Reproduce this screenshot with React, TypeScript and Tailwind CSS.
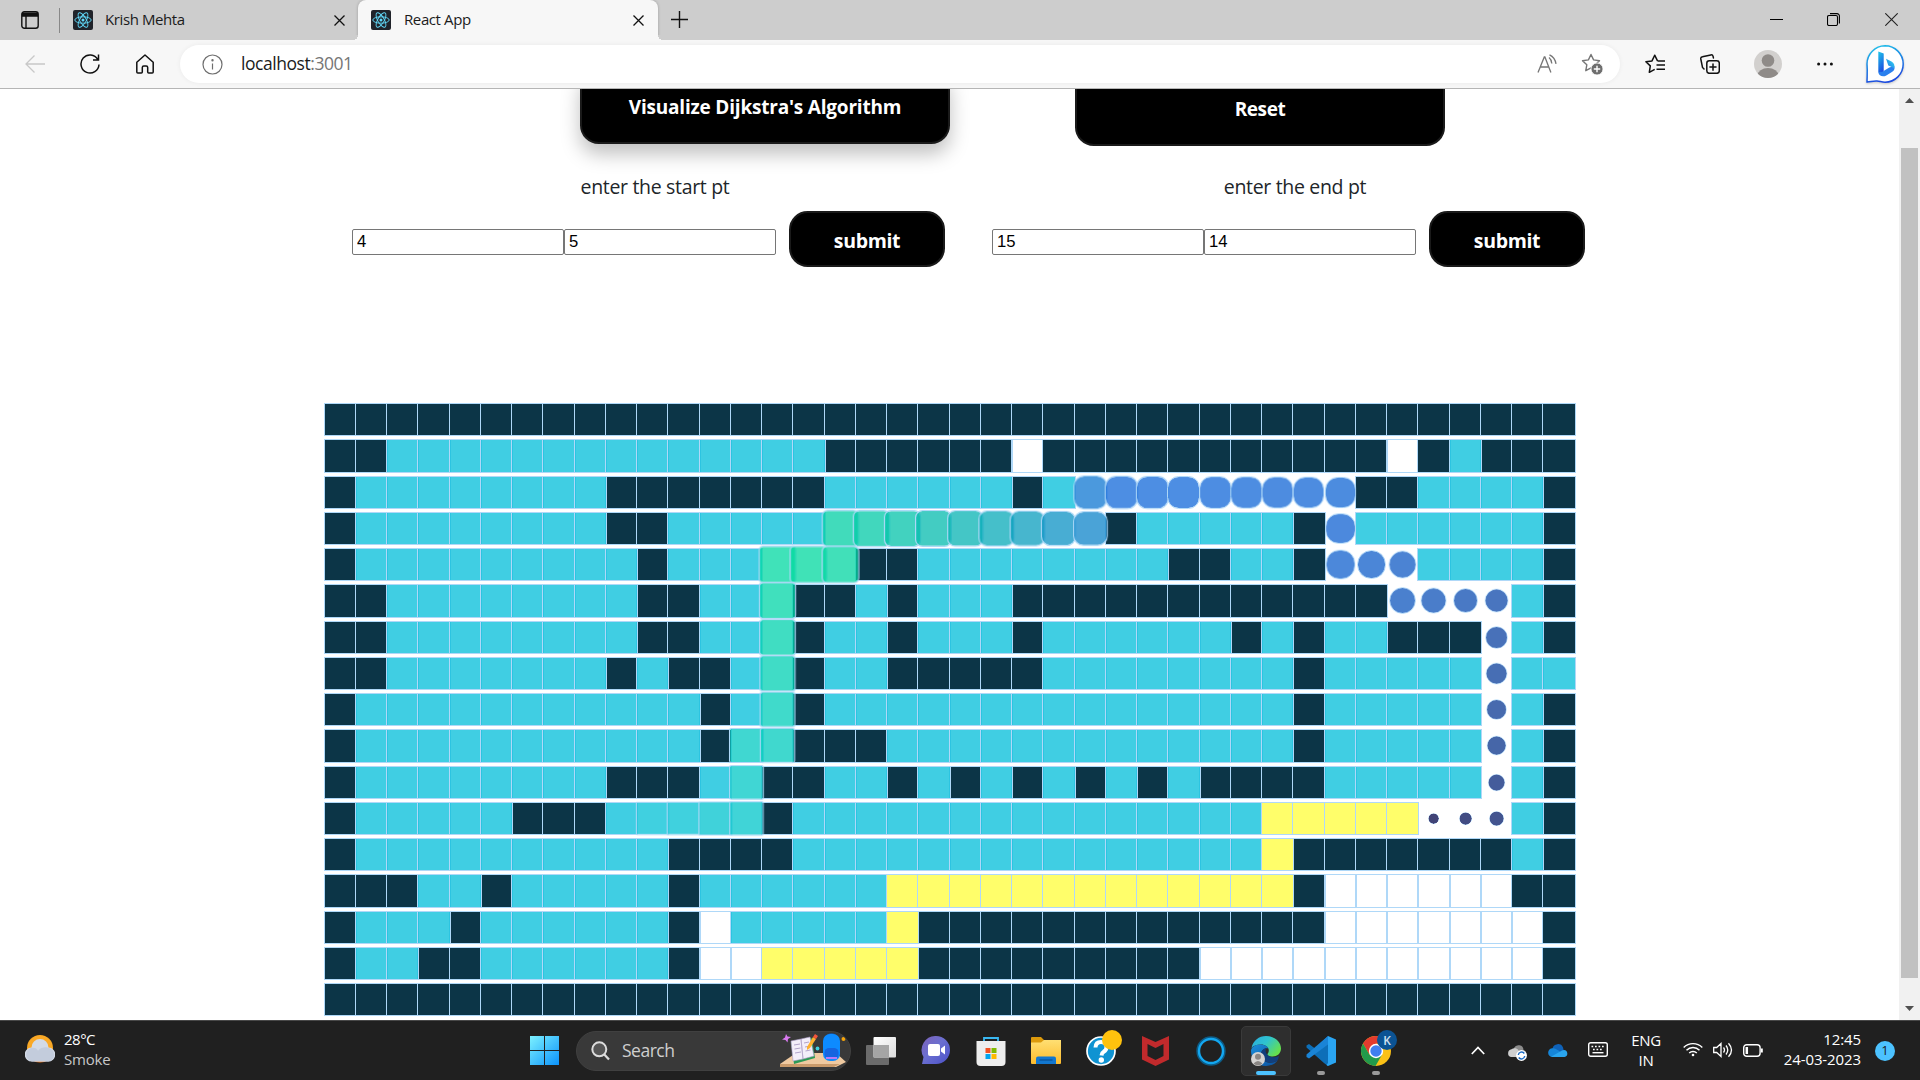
import React from "react";

type Kind = "W" | "v" | "y" | "." | "a";

/* Each row lists runs of cells: W wall, v visited, y shortest path, . empty, a animating. */
const ROWS = [
  "W40",
  "W2 v14 W6 .1 W11 .1 W1 v1 W3",
  "W1 v8 W7 v6 W1 v1 a9 W2 v4 W1",
  "W1 v8 W2 v5 a9 W1 v5 W1 a1 v6 W1",
  "W1 v9 W1 v3 a3 W2 v8 W2 v2 W1 a3 v4 W1",
  "W2 v8 W2 v2 a1 W2 v1 W1 v3 W12 a4 v1 W1",
  "W2 v8 W2 v2 a1 W1 v2 W1 v3 W1 v6 W1 v1 W1 v2 W3 a1 v1 W1",
  "W2 v7 W1 v1 W2 v1 a1 W1 v2 W5 v8 W1 v5 a1 v2",
  "W1 v11 W1 v1 a1 W1 v15 W1 v5 a1 v1 W1",
  "W1 v11 W1 a2 W3 v13 W1 v5 a1 v1 W1",
  "W1 v8 W3 v1 a1 W2 v2 W1 v1 W1 v1 W1 v1 W1 v1 W1 v1 W4 v5 a1 v1 W1",
  "W1 v5 W3 v1 a4 W1 v15 y5 a3 v1 W1",
  "W1 v10 W4 v15 y1 W7 v1 W1",
  "W3 v2 W1 v5 W1 v6 y13 W1 .6 W2",
  "W1 v3 W1 v6 W1 .1 v5 y1 W13 .7 W1",
  "W1 v2 W2 v6 W1 .2 y5 W9 .11 W1",
  "W40",
];

const expand = (row: string): Kind[] =>
  row.split(" ").flatMap((run) => Array<Kind>(Number(run.slice(1))).fill(run[0] as Kind));

const line = (r0: number, c0: number, r1: number, c1: number): string[] => {
  const n = Math.max(Math.abs(r1 - r0), Math.abs(c1 - c0));
  return Array.from({ length: n }, (_, k) => `${r0 + Math.sign(r1 - r0) * k},${c0 + Math.sign(c1 - c0) * k}`);
};

/* Animating cells, most recently started first. */
const CORNERS = [
  [11, 35], [11, 37], [5, 37], [5, 34], [4, 34], [4, 32], [2, 32], [2, 24],
  [3, 24], [3, 16], [4, 16], [4, 14], [9, 14], [9, 13], [11, 13], [11, 9],
];
const ORDER = CORNERS.slice(1).flatMap((c, i) => line(CORNERS[i][0], CORNERS[i][1], c[0], c[1]));

/* Elapsed share of the animation at given positions along the trail. */
const TIMES = [
  [0, 0.014], [1, 0.048], [2, 0.083], [3, 0.122], [4, 0.166], [8, 0.25], [12, 0.343], [16, 0.43],
  [23, 0.5], [24, 0.52], [25, 0.54], [29, 0.62], [33, 0.69], [36, 0.755], [41, 0.84], [44, 0.88], [47, 0.95],
];
const progress = (i: number) => {
  for (let k = 1; k < TIMES.length; k++) {
    const [i0, t0] = TIMES[k - 1];
    const [i1, t1] = TIMES[k];
    if (i <= i1) return t0 + ((i - i0) / (i1 - i0)) * (t1 - t0);
  }
  return 1;
};

/* cubic-bezier(0, 0, 0.58, 1) */
const easeOut = (x: number) => {
  let lo = 0;
  let hi = 1;
  for (let k = 0; k < 30; k++) {
    const s = (lo + hi) / 2;
    if (3 * (1 - s) * s * s * 0.58 + s * s * s < x) lo = s;
    else hi = s;
  }
  return 3 * (1 - lo) * lo * lo + lo * lo * lo;
};

const COLORS: [number, number[]][] = [
  [0, [0, 0, 66]], [0.5, [17, 104, 217]], [0.75, [0, 217, 159]], [1, [0, 190, 218]],
];

const frame = (t: number): React.CSSProperties => {
  let k = 1;
  while (k < COLORS.length - 1 && t > COLORS[k][0]) k++;
  const [t0, a] = COLORS[k - 1];
  const [t1, b] = COLORS[k];
  const e = easeOut((t - t0) / (t1 - t0));
  const rgb = a.map((v, j) => Math.round(v + (b[j] - v) * e));
  const scale = t < 0.75 ? 0.3 + 0.85 * easeOut(t / 0.75) : 1.15 - 0.15 * easeOut((t - 0.75) / 0.25);
  return {
    backgroundColor: `rgba(${rgb.join(",")},0.75)`,
    transform: `scale(${scale})`,
    borderRadius: `${100 * (1 - easeOut(t))}%`,
  };
};

const KIND_CLASS: Record<Kind, string> = {
  W: "bg-[#0c3547]",
  v: "isolate bg-[rgba(0,190,218,0.75)]",
  y: "isolate bg-[#fffe6a]",
  ".": "",
  a: "isolate will-change-transform",
};

function Grid() {
  return (
    <div className="ml-[324.625px] mt-[137px] flex w-[1250px] flex-col gap-[5px]">
      {ROWS.map((row, r) => (
        <div key={r} className="flex h-[31.25px]">
          {expand(row).map((k, c) => (
            <div
              key={c}
              className={`h-[31.25px] w-[31.25px] shrink-0 outline outline-1 outline-[rgb(175,216,248)] ${KIND_CLASS[k]}`}
              style={k === "a" ? frame(progress(ORDER.indexOf(`${r},${c}`))) : undefined}
            />
          ))}
        </div>
      ))}
    </div>
  );
}

const ReactIcon = () => (
  <svg className="size-5 shrink-0" viewBox="0 0 20 20" fill="none" stroke="#61dafb">
    <rect width="20" height="20" rx="2" fill="#20232a" stroke="none" />
    <g strokeWidth="0.9">
      <ellipse cx="10" cy="10" rx="8.2" ry="3.2" />
      <ellipse cx="10" cy="10" rx="8.2" ry="3.2" transform="rotate(60 10 10)" />
      <ellipse cx="10" cy="10" rx="8.2" ry="3.2" transform="rotate(120 10 10)" />
    </g>
    <circle cx="10" cy="10" r="1.5" fill="#61dafb" stroke="none" />
  </svg>
);

const TabClose = () => (
  <svg className="size-[11px] shrink-0" viewBox="0 0 11 11" stroke="#111" strokeWidth="1.3">
    <path d="M.5.5l10 10M10.5.5l-10 10" />
  </svg>
);

function TabStrip() {
  return (
    <div className="flex h-10 items-center bg-[#cdcdcd]">
      <svg className="ml-[21px] size-[18px]" viewBox="0 0 18 18" fill="none" stroke="#111" strokeWidth="1.4">
        <rect x=".8" y=".8" width="16.4" height="16.4" rx="2.5" />
        <path d="M1 2.8h16M1 4.4h16" strokeWidth="2.6" />
        <path d="M5 5v12" />
      </svg>
      <div className="ml-5 h-[25px] w-px bg-[#888]" />
      <div className="ml-[13px] flex w-[272px] items-center">
        <ReactIcon />
        <span className="ml-3 w-[229px] pb-0.5 text-[15px] leading-5 tracking-[-0.4px] text-[#1b1b1b]">Krish Mehta</span>
        <TabClose />
      </div>
      <div className="relative ml-[13px] flex h-10 w-[300px] items-center rounded-t-[8px] bg-[#f7f7f7] pl-[13px] shadow-[0_0_3px_rgba(0,0,0,0.25)] [clip-path:inset(0_-6px_0_-6px)]">
        <ReactIcon />
        <span className="ml-[13px] w-[229px] pb-0.5 text-[15px] leading-5 tracking-[-0.4px] text-[#1b1b1b]">React App</span>
        <TabClose />
        <span className="absolute -left-[5px] bottom-0 size-[5px] bg-[radial-gradient(circle_at_0_0,#cdcdcd_5px,#f7f7f7_5px)]" />
        <span className="absolute -right-[5px] bottom-0 size-[5px] bg-[radial-gradient(circle_at_100%_0,#cdcdcd_5px,#f7f7f7_5px)]" />
      </div>
      <svg className="mb-px ml-[13px] size-[17px]" viewBox="0 0 17 17" stroke="#111" strokeWidth="1.4">
        <path d="M8.5 0v17M0 8.5h17" />
      </svg>
      <svg className="mb-px ml-auto size-[13px]" viewBox="0 0 13 13" stroke="#000">
        <path d="M0 6.5h13" />
      </svg>
      <svg className="mb-px ml-11 size-[13px]" viewBox="0 0 13 13" fill="none" stroke="#000" strokeWidth="1.1">
        <rect x=".5" y="2.5" width="10" height="10" rx="1.5" />
        <path d="M3 .6h7a2.4 2.4 0 012.4 2.4v7.5" />
      </svg>
      <svg className="mb-px ml-[45px] mr-[22px] size-[13px]" viewBox="0 0 13 13" stroke="#222" strokeWidth="1.1">
        <path d="M.3.3l12.4 12.4M12.7.3L.3 12.7" />
      </svg>
    </div>
  );
}

const STAR = "M10 1.5l2.600 5.400 5.900.8-4.300 4.100 1 5.900L10 14.900l-5.200 2.800 1-5.900L1.500 7.700l5.900-.8z";

function Toolbar() {
  return (
    <div className="flex h-12 items-center bg-[#f7f7f7]">
      <svg className="ml-[25px] size-5" viewBox="0 0 20 20" fill="none" stroke="#c8c8c8" strokeWidth="1.3">
        <path d="M20 10H1M9.500 1.500L1 10l8.500 8.500" />
      </svg>
      <svg className="ml-[35px] size-5" viewBox="0 0 20 20" fill="none" stroke="#111" strokeWidth="1.5">
        <path d="M17.800 5.500A9 9 0 1019 10.500M18.500.5v5.500h-5.500" />
      </svg>
      <svg className="ml-[35px] size-5" viewBox="0 0 20 20" fill="none" stroke="#111" strokeWidth="1.5" strokeLinejoin="round">
        <path d="M10 1L1.800 8.300V18a1 1 0 001 1h3.500a1 1 0 001-1v-4.500a1.500 1.500 0 011.500-1.500h2.400a1.500 1.500 0 011.500 1.500V18a1 1 0 001 1h3.500a1 1 0 001-1V8.300z" />
      </svg>
      <div className="ml-[25px] flex h-[38px] w-[1440px] items-center rounded-full bg-white pl-[22px] pr-[17px] shadow-[0_0_5px_rgba(0,0,0,0.06)]">
        <svg className="size-[21px]" viewBox="0 0 21 21" fill="none" stroke="#6e6e6e" strokeWidth="1.2">
          <circle cx="10.5" cy="10.5" r="9.5" />
          <path d="M10.500 9.500v6" />
          <circle cx="10.5" cy="6.3" r=".6" fill="#6e6e6e" />
        </svg>
        <span className="ml-[18px] pb-0.5 text-[17.5px] leading-6 tracking-[-0.45px] text-[#1b1b1b]">
          localhost<span className="text-[#767676]">:3001</span>
        </span>
        <svg className="ml-auto h-[20px] w-[20px]" viewBox="0 0 20 20" fill="none" stroke="#767676" strokeWidth="1.3">
          <path d="M1 18.500L7.300 3h.6l6 15.500M3.500 13h8.500M12 3.500q2.500 2 2.800 6M12.500.8q5.500 2.500 6.500 9" />
        </svg>
        <svg className="ml-6 h-[22px] w-[22px]" viewBox="0 0 22 22" fill="none" stroke="#767676" strokeWidth="1.4">
          <path d={STAR} strokeLinejoin="round" />
          <circle cx="16" cy="16" r="6" fill="#6e6e6e" stroke="#fff" strokeWidth=".8" />
          <path d="M16 12.800v6.400M12.800 16h6.400" stroke="#fff" />
        </svg>
      </div>
      <svg className="ml-[25px] size-5" viewBox="0 0 20 20" fill="none" stroke="#111" strokeWidth="1.5" strokeLinejoin="round">
        <path d="M12.500 6.900L9.700 1.200 7 6.900.9 7.700l4.400 4.200-1 6.400 5.400-3M12.500 6.900H20M11.500 11H20M11.500 15.200H20" />
      </svg>
      <svg className="ml-[35px] size-5" viewBox="0 0 20 20" fill="none" stroke="#111" strokeWidth="1.5" strokeLinecap="round">
        <rect x="6.8" y="6.8" width="12.5" height="12.5" rx="2.5" />
        <path d="M13 10v6.200M9.900 13H16M4 15L2.500 13.500.8 5a2 2 0 011.600-2.300L10.800.9a2 2 0 012.300 1.500l.3 1.500" />
      </svg>
      <svg className="ml-[34px] size-7" viewBox="0 0 28 28">
        <clipPath id="avatar"><circle cx="14" cy="14" r="14" /></clipPath>
        <g clipPath="url(#avatar)">
          <rect width="28" height="28" fill="#d2d0ce" />
          <circle cx="14" cy="10.5" r="6.3" fill="#8f8b88" />
          <ellipse cx="14" cy="25.5" rx="10.5" ry="7.5" fill="#8f8b88" />
        </g>
      </svg>
      <svg className="ml-[35px] h-5 w-[16px]" viewBox="0 0 16 20" fill="#111">
        <circle cx="1.6" cy="10" r="1.5" />
        <circle cx="8" cy="10" r="1.5" />
        <circle cx="14.4" cy="10" r="1.5" />
      </svg>
      <svg className="ml-[33px] size-[38px] overflow-visible drop-shadow-[0_1px_1px_rgba(0,0,0,0.2)]" viewBox="0 0 38 38">
        <defs>
          <linearGradient id="bing" x1="0" y1="0" x2="0.3" y2="1">
            <stop offset="0" stopColor="#1fc8ea" />
            <stop offset="1" stopColor="#1b4be0" />
          </linearGradient>
          <linearGradient id="bing2" x1="0" y1="1" x2="1" y2="0">
            <stop offset="0" stopColor="#1e6fe8" />
            <stop offset="1" stopColor="#35dff0" />
          </linearGradient>
        </defs>
        <path d="M19 .8a18.200 18.200 0 110 36.400c-3 0-5-.9-8-1.200-4-.3-7 1-10 .9 0-5 .7-9 0-18A18.200 18.200 0 0119 .8z" fill="#fff" stroke="url(#bing)" strokeWidth="1.5" />
        <path d="M12.300 6.500l5.400 2v17.500l-1.800 3.500-3.600-2.500z" fill="url(#bing)" />
        <path d="M12.300 27c.5 4.500 5 5.200 8 3.400l6-3.600c2.500-1.700 2.600-4 2-5.800l-5 1.500-7 4.300z" fill="#2a80ee" />
        <path d="M20 13.800l5.500 2.800c3 1.700 3.600 4.400 2.300 7-.7-1.500-3-2-5.500-3.200z" fill="url(#bing2)" />
      </svg>
    </div>
  );
}

function Scrollbar() {
  return (
    <div className="flex w-[21px] shrink-0 flex-col items-center justify-between bg-[#f1f1f1] pb-[9px] pt-[9px]">
      <svg className="h-[5px] w-[9px] shrink-0" viewBox="0 0 9 5" fill="#505050"><path d="M0 5L4.500 0 9 5z" /></svg>
      <div className="mb-[28px] mt-auto h-[830px] w-[17px] bg-[#c1c1c1]" />
      <svg className="h-[5px] w-[9px] shrink-0" viewBox="0 0 9 5" fill="#505050"><path d="M0 0L4.500 5 9 0z" /></svg>
    </div>
  );
}

const INPUT = "mt-[6px] h-[26px] w-[212px] rounded-[2px] border border-[#767676] bg-white px-[4px] font-['Liberation_Sans',sans-serif] text-[16.67px] text-black";
const BUTTON = "rounded-[18.75px] border-2 border-[#1a1a1a] bg-black text-center font-bold text-white";

function PointForm({ label, a, b }: { label: string; a: string; b: string }) {
  return (
    <div className="w-[640px]">
      <p className="h-[30px] text-center text-[19.5px] leading-[31px] tracking-[-0.32px] text-[#212529]">{label}</p>
      <div className="mt-2.5 flex items-center pl-[17px]">
        <input className={INPUT} defaultValue={a} />
        <input className={INPUT} defaultValue={b} />
        <button className={`${BUTTON} ml-[13px] h-[56px] w-[156px] pt-1 text-[19.5px] tracking-[-0.35px]`}>submit</button>
      </div>
    </div>
  );
}

function Page() {
  return (
    <div className="flex h-[931px] overflow-hidden bg-white">
      <main className="min-w-0 flex-1">
        <div className="flex h-[57px] items-end pl-[580px]">
          <button className={`${BUTTON} mb-0.5 h-[75px] w-[370px] pt-[2px] text-[19px] tracking-[-0.2px] shadow-[0_10px_19px_rgba(0,0,0,0.25)]`}>
            Visualize Dijkstra's Algorithm
          </button>
          <button className={`${BUTTON} ml-[125px] h-[75px] w-[370px] pt-[2px] text-[19px] tracking-[-0.4px]`}>Reset</button>
        </div>
        <div className="mt-[25px] flex pl-[335px]">
          <PointForm label="enter the start pt" a="4" b="5" />
          <PointForm label="enter the end pt" a="15" b="14" />
        </div>
        <Grid />
      </main>
      <Scrollbar />
    </div>
  );
}

const AppSlot = ({ children, mark, active }: { children: React.ReactNode; mark?: boolean; active?: boolean }) => (
  <div className="flex h-[60px] w-[55px] items-center justify-center">
    <div className={`relative flex h-[50px] w-[50px] items-center justify-center rounded-[5px] ${active ? "border border-[#3a3a3a] bg-[#2e2e2e]" : ""}`}>
      {children}
      {mark && <span className="absolute bottom-[1px] h-1 w-2 rounded-full bg-[#9a9a9a]" />}
      {active && <span className="absolute bottom-0 h-1 w-5 rounded-full bg-[#4cc2ff]" />}
    </div>
  </div>
);

function Taskbar() {
  return (
    <footer className="flex h-[60px] items-center border-t border-[#484848] bg-[#202020] text-white">
      <svg className="ml-[25px] h-[32px] w-[30px]" viewBox="0 0 30 32">
        <circle cx="15" cy="13" r="13" fill="#f9a825" />
        <path d="M7 25a11 8 0 0016 0z" fill="#f4730b" />
        <path d="M7 26.500a7 7 0 01-.5-14 8.500 8.500 0 0117 0 7 7 0 01-.5 14z" fill="#d3dae6" />
        <path d="M7 26.500a7 7 0 010-13.800c3-.4 5 1 6 3 3-4 8-3.500 10-3a7 7 0 01.5 13.800z" fill="#c3ccdc" />
      </svg>
      <div className="ml-[9px] w-[466px] pb-1 text-[15px] leading-5 tracking-[-0.5px]">
        <div>28°C</div>
        <div className="tracking-[-0.2px] text-[#c8c8c8]">Smoke</div>
      </div>
      <svg className="h-[29px] w-[29px]" viewBox="0 0 29 29">
        <defs>
          <linearGradient id="win" x1="0" y1="0" x2="1" y2="1" gradientUnits="objectBoundingBox">
            <stop offset="0" stopColor="#7cf1ff" />
            <stop offset="1" stopColor="#0c93fb" />
          </linearGradient>
        </defs>
        <path d="M0 0h14v14H0zM15 0h14v14H15zM0 15h14v14H0zM15 15h14v14H15z" fill="url(#win)" />
      </svg>
      <div className="ml-[17px] flex h-[40px] w-[275px] items-center overflow-hidden rounded-full border border-[#404040] bg-[#393939] pl-[14px]">
        <svg className="h-[20px] w-[19px]" viewBox="0 0 19 20" fill="none" stroke="#dcdcdc">
          <circle cx="8.3" cy="8.3" r="7" strokeWidth="2" fill="#555" />
          <path d="M13.300 13.500L18 18.500" strokeWidth="2.3" />
        </svg>
        <span className="ml-3 text-[17.5px] tracking-[-0.5px] text-[#cfcfcf]">Search</span>
        <svg className="ml-auto mr-[4px] h-[36px] w-[66px]" viewBox="0 0 66 36">
          <path d="M0 31l16-11h40l10 9-10 5H0z" fill="#efc9a0" />
          <path d="M0 31h60l-6 3H0z" fill="#c99a6b" />
          <path d="M11 9l21-4 3 20-21 6z" fill="#2b9a55" />
          <path d="M11 8l10-2 2 20-10 2zM21 6l9-2 4 19-11 3z" fill="#f3eefa" stroke="#a99bc4" strokeWidth=".6" />
          <path d="M14 12l6-1M14.500 16l6-1M15 20l6-1M24 10l5-1M25 14l5-1M25.500 18l5-1" stroke="#a99bc4" strokeWidth=".9" />
          <path d="M27 14l6-10 3 2-6 9-3 2z" fill="#ffb02e" />
          <path d="M33 4l2-3 3 2-2 3z" fill="#f4553c" />
          <path d="M6 1l1.500 2.500L11 4 8 6l-.5 3.500L5.500 7 2 6.500 5 4.500z" fill="#d97af0" />
          <circle cx="37.5" cy="15.5" r="1.9" fill="#3fd0e0" />
          <circle cx="63.5" cy="6" r="2" fill="#f7a50a" />
          <path d="M47 4a5 5 0 019 0" fill="none" stroke="#0a57b8" strokeWidth="2" />
          <rect x="43" y="1" width="17" height="27" rx="7" fill="#0d8bff" />
          <rect x="44.5" y="15" width="14" height="11" rx="4.5" fill="#1565e0" />
          <path d="M46 25h11" stroke="#b77af7" strokeWidth="1.8" />
        </svg>
      </div>
      <div className="ml-[2px] mr-px flex">
        <AppSlot>
          <svg className="h-[28px] w-[30px]" viewBox="0 0 30 28">
            <defs>
              <linearGradient id="tv" x1="0" y1="0" x2="1" y2="1"><stop stopColor="#fff" /><stop offset="1" stopColor="#dcdcdc" /></linearGradient>
            </defs>
            <rect y="8" width="23" height="20" rx="1" fill="#6b6b6b" />
            <rect x="7.5" width="22.5" height="20.5" rx="1" fill="url(#tv)" />
            <path d="M7.500 8H23v12.500H7.500z" fill="#a5a5a5" />
          </svg>
        </AppSlot>
        <AppSlot>
          <svg className="h-[29px] w-[30px]" viewBox="0 0 30 29">
            <defs>
              <linearGradient id="chat" x1="0" y1="0" x2="1" y2="1"><stop stopColor="#7e62b8" /><stop offset=".45" stopColor="#6b6fd0" /><stop offset="1" stopColor="#4a50c8" /></linearGradient>
            </defs>
            <path d="M15 0a14 14 0 110 28H1l1.500-7A14 14 0 0115 0z" fill="url(#chat)" />
            <rect x="7" y="8" width="12" height="12" rx="2" fill="#fff" />
            <path d="M20 12.500l4-3v9l-4-3z" fill="#fff" />
          </svg>
        </AppSlot>
        <AppSlot>
          <svg className="h-[30px] w-[30px]" viewBox="0 0 30 30">
            <path d="M8 7V2h14v5" fill="none" stroke="#39b8f2" strokeWidth="1.8" />
            <path d="M.5 5h29v21a4 4 0 01-4 4h-21a4 4 0 01-4-4z" fill="#ededed" />
            <path d="M9.500 12h5v5h-5z" fill="#f25022" /><path d="M15.500 12h5v5h-5z" fill="#7fba00" />
            <path d="M9.500 18h5v5h-5z" fill="#00a4ef" /><path d="M15.500 18h5v5h-5z" fill="#ffb900" />
          </svg>
        </AppSlot>
        <AppSlot>
          <svg className="h-[27px] w-[30px]" viewBox="0 0 30 27">
            <defs>
              <linearGradient id="fold" x1="0" y1="0" x2="0" y2="1"><stop stopColor="#ffdf73" /><stop offset="1" stopColor="#fdbb2c" /></linearGradient>
            </defs>
            <path d="M0 1a1 1 0 011-1h9l3 3h16a1 1 0 011 1v4H0z" fill="#dc9a0c" />
            <path d="M0 5.500h10l3-2.500h17v23a1 1 0 01-1 1H1a1 1 0 01-1-1z" fill="url(#fold)" />
            <path d="M5 27v-5.500a2 2 0 012-2h16a2 2 0 012 2V27z" fill="#1277cf" />
            <path d="M8.500 23h13" stroke="#0a4f94" strokeWidth="1.2" />
          </svg>
        </AppSlot>
        <AppSlot>
          <svg className="ml-[6px] h-[36px] w-[36px] -translate-y-[3px]" viewBox="0 0 36 36">
            <circle cx="15" cy="21" r="14" fill="#0f93d2" stroke="#fff" strokeWidth="1.7" />
            <path d="M9.500 17.500q.2-5.500 5.500-5.500t5.500 5q0 3-2.800 4.800-2 1.200-2.200 3.700" fill="none" stroke="#fff" strokeWidth="4" />
            <circle cx="15.3" cy="30" r="2.7" fill="#fff" />
            <circle cx="26" cy="10" r="10" fill="#ffc20e" />
          </svg>
        </AppSlot>
        <AppSlot>
          <svg className="h-[30px] w-[27px]" viewBox="0 0 27 30" fill="#c12a2c">
            <path d="M0 0l13.500 6L27 0v23.500L13.500 30 0 23.500zM5.500 8v12l8 4 8-4V8l-8 4z" fillRule="evenodd" />
          </svg>
        </AppSlot>
        <AppSlot>
          <svg className="h-[30px] w-[30px]" viewBox="0 0 30 30" fill="none">
            <circle cx="15" cy="15" r="13.2" stroke="#0d5c86" strokeWidth="3" />
            <circle cx="15" cy="15" r="12" stroke="#13a7f0" strokeWidth="2.4" />
          </svg>
        </AppSlot>
        <AppSlot active>
          <svg className="h-[30px] w-[30px]" viewBox="0 0 30 30">
            <defs>
              <linearGradient id="e1" x1="0" y1="0" x2="1" y2=".6"><stop stopColor="#2aa9e0" /><stop offset=".5" stopColor="#2fc4cf" /><stop offset="1" stopColor="#66e04d" /></linearGradient>
              <linearGradient id="e2" x1="0" y1="0" x2="1" y2="1"><stop stopColor="#1b8fdc" /><stop offset="1" stopColor="#0a4f9c" /></linearGradient>
            </defs>
            <path d="M.5 12C2 4.500 8 0 15 0c9 0 15 6 15 12.500 0 5-4 8-8.500 8-3.500 0-5-1-5-2 0-.9 1.300-1.500 1.300-4C17.800 11 14 8.500 10 8.500 5.500 8.500 2 10 .5 12z" fill="url(#e1)" />
            <path d="M0 15c0-4 5-7 10-6.500 4 .3 6.500 2 7.500 4-4-1-7.500 2-7.500 6 0 7 8 11 16.500 6C24 28 20 30 15 30 6.500 30 0 23.500 0 15z" fill="url(#e2)" />
            <path d="M10 18.500c0-3.500 2.500-6 5.500-6.500-1.500 2-1 5 1 7 3 2.800 7.500 3 11.500 1-.5 2-1 3.500-1.500 4.500-8.500 5-16.500 1-16.500-6z" fill="#123f7c" />
            <circle cx="7" cy="23" r="7" fill="#d6d4d2" />
            <circle cx="7" cy="20.8" r="3" fill="#8a8683" />
            <path d="M2.500 27.500q4.500-5 9 0-4.500 4-9 0z" fill="#8a8683" />
          </svg>
        </AppSlot>
        <AppSlot mark>
          <svg className="h-[30px] w-[30px]" viewBox="0 0 30 30">
            <path d="M22 0L9 12.500 3 8 .5 9.500v2L18 27l4 3z" fill="#0d6fb8" />
            <path d="M22 0v8.500L3 22.500.5 21v-2.500z" fill="#1a84d6" />
            <path d="M22 0l8 3.500v23L22 30l-1.500-1 1.500-2z" fill="#2aa5f2" />
          </svg>
        </AppSlot>
        <AppSlot mark>
          <svg className="ml-[6px] h-[36px] w-[36px] -translate-y-[3px]" viewBox="0 0 36 36">
            <circle cx="15" cy="21" r="15" fill="#fbc116" />
            <path d="M2 13.500A15 15 0 0128 13.500H15L8.500 24.700z" fill="#e33b2e" />
            <path d="M2 13.500A15 15 0 0014.500 36l6.500-11.200-6-3.800-6.500 3.700z" fill="#229a4b" />
            <circle cx="15" cy="21" r="7.2" fill="#fff" />
            <circle cx="15" cy="21" r="5.7" fill="#3f7ff0" />
            <circle cx="26" cy="10" r="10" fill="#0b5394" />
            <text x="26" y="14.5" textAnchor="middle" fontSize="12" fontWeight="600" fill="#cfe0f0">K</text>
          </svg>
        </AppSlot>
      </div>
      <svg className="ml-[67px] h-[9px] w-[14px]" viewBox="0 0 14 9" fill="none" stroke="#fff" strokeWidth="1.7">
        <path d="M.8 8L7 1.500 13.200 8" />
      </svg>
      <svg className="ml-[22px] mr-px mt-1 h-[17px] w-[20px]" viewBox="0 0 20 17">
        <path d="M7 4a5 5 0 019.500 2A4 4 0 0118 13H6z" fill="#8c8c8c" />
        <path d="M4 13a4 4 0 01.5-7.800A5 5 0 0112 7l3 6z" fill="#cfcfcf" />
        <circle cx="14.5" cy="11.5" r="5.4" fill="#fff" />
        <path d="M11.300 11a3.300 3.300 0 016-1.500M17.700 12a3.300 3.300 0 01-6 1.500" fill="none" stroke="#1668c5" strokeWidth="1.4" />
      </svg>
      <svg className="ml-5 h-[13px] w-[20px]" viewBox="0 0 20 13">
        <path d="M4.500 4.500A5.500 5.500 0 0115 3.600l1 4L5 12z" fill="#0f62b8" />
        <path d="M4.500 13a4.300 4.300 0 010-8.700c2.500-.2 4 1 6 2.200L15 10z" fill="#1585d8" />
        <path d="M3 12.700L14 6.500a4 4 0 012-.6A3.600 3.600 0 0116.500 13h-12z" fill="#2aa5ee" />
      </svg>
      <svg className="mb-0.5 ml-5 h-[15px] w-[20px]" viewBox="0 0 20 15" fill="none" stroke="#fff" strokeWidth="1.4">
        <rect x=".7" y=".7" width="18.6" height="13.6" rx="2" />
        <path d="M3.500 4.500h13M5 7.500h10" strokeDasharray="1.7 1.8" />
        <path d="M4.500 10.700h11" />
      </svg>
      <div className="ml-[18px] w-[40px] pb-0.5 text-center text-[15px] leading-5 tracking-[-0.3px]">
        <div>ENG</div>
        <div>IN</div>
      </div>
      <svg className="mb-0.5 ml-[17px] h-[15px] w-[20px]" viewBox="0 0 20 15" fill="none" stroke="#fff" strokeWidth="1.4">
        <path d="M.7 5.500a13 13 0 0118.600 0M3.500 8.300a9 9 0 0113 0M6.200 11a5.400 5.400 0 017.600 0" />
        <circle cx="10" cy="13" r="1.3" fill="#fff" stroke="none" />
      </svg>
      <svg className="mb-0.5 ml-[10px] h-[16px] w-[20px]" viewBox="0 0 20 16" fill="none" stroke="#fff" strokeWidth="1.3">
        <path d="M.7 5.500h3L8 1.500v13l-4.300-4h-3zM10.500 5.500q2 2.500 0 5M13 3.500q3.500 4.500 0 9M15.500 1.200q6 6.800 0 13.600" />
      </svg>
      <svg className="mb-px ml-[10px] h-[13px] w-[20px]" viewBox="0 0 20 13" fill="none" stroke="#fff" strokeWidth="1.4">
        <rect x=".7" y=".7" width="16.4" height="11.6" rx="3" />
        <path d="M3.800 3v7" strokeWidth="2.5" />
        <path d="M18.800 4.500v4" strokeWidth="2" />
      </svg>
      <div className="ml-[10px] w-[88px] whitespace-nowrap pb-1 text-right text-[15px] leading-5 tracking-[-0.1px]">
        <div>12:45</div>
        <div>24-03-2023</div>
      </div>
      <div className="ml-[14px] flex size-5 items-center justify-center rounded-full bg-[#4cc2ff] text-[13px] text-[#1a1a1a]">1</div>
    </footer>
  );
}

export default function App() {
  return (
    <div className="flex h-[1080px] w-[1920px] flex-col overflow-hidden font-['Open_Sans','Noto_Sans',sans-serif]">
      <TabStrip />
      <Toolbar />
      <div className="h-px bg-[#b5b5b5]" />
      <Page />
      <Taskbar />
    </div>
  );
}
